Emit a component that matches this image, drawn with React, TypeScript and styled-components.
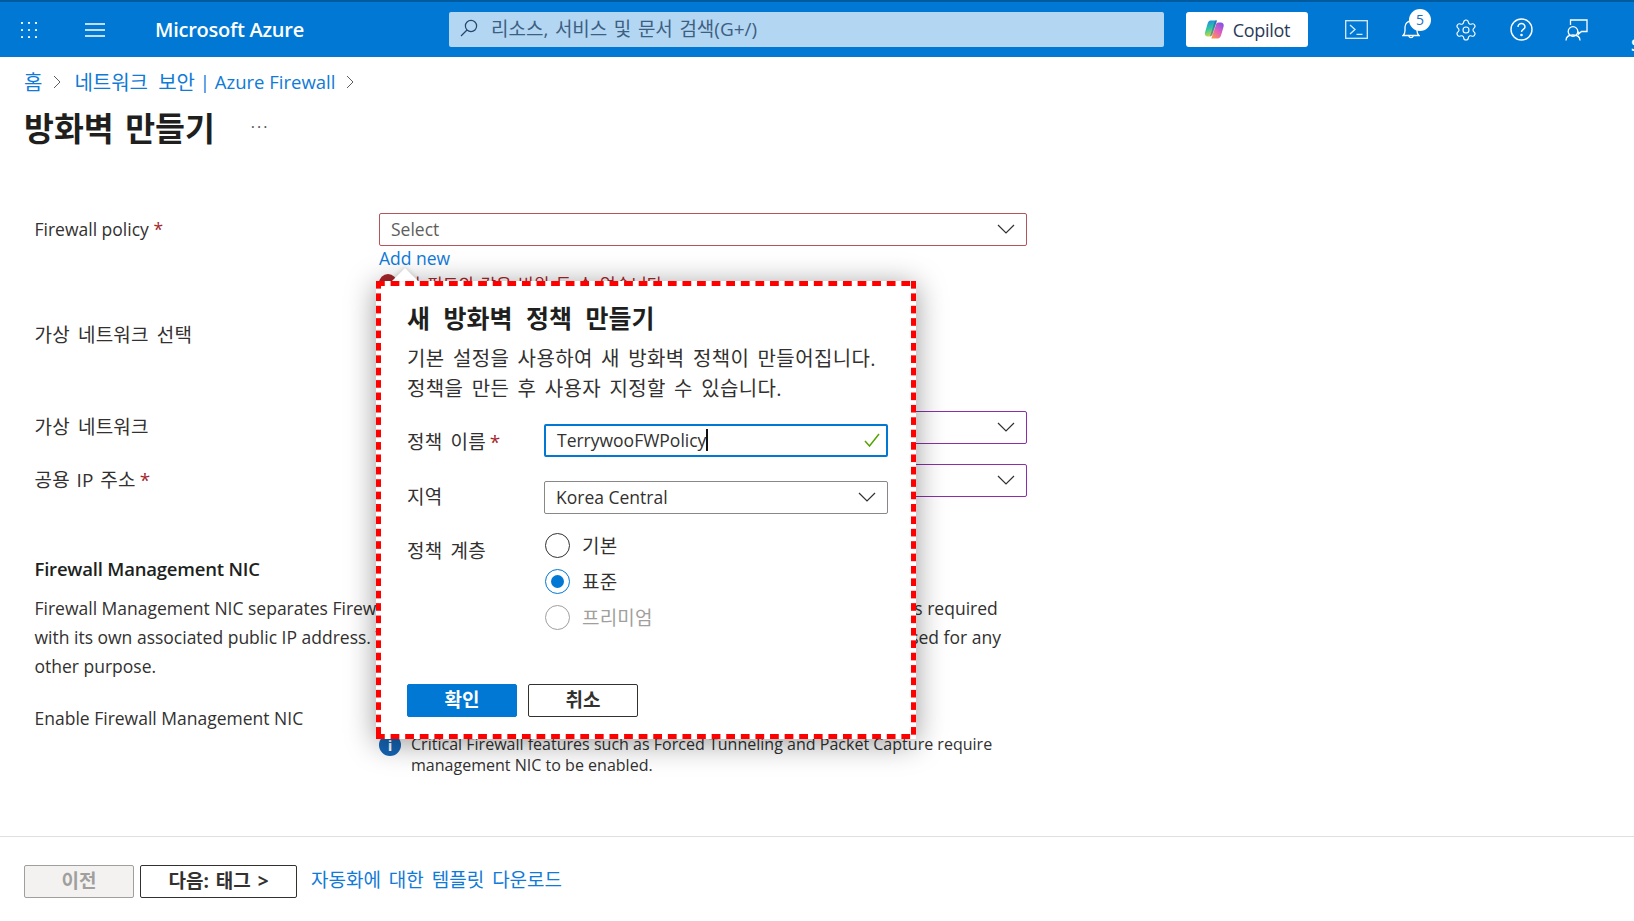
import React from 'react';
import styled, { createGlobalStyle, css } from 'styled-components';
import { Settings } from 'lucide-react';

const fontStack = '"Open Sans", "Noto Sans CJK KR", sans-serif';
const blue = '#0078d4';
const link = '#0f7ad8';
const ink = '#323130';

// hangul in the reference runs wider than the latin next to it
const hangul = css`
    font-size: 19px;
    letter-spacing: 0.2px;
    word-spacing: 3px;
`;

const GlobalStyle = createGlobalStyle`
    html, body {
        margin: 0;
        padding: 0;
        background: #fff;
        overflow: hidden;
    }
    body {
        font-family: ${fontStack};
        color: ${ink};
    }
`;

const Page = styled.div`
    width: 1634px;
    height: 921px;
    display: flex;
    flex-direction: column;
    overflow: hidden;
`;

const TopBar = styled.header`
    height: 55px;
    flex: none;
    display: flex;
    align-items: center;
    background: ${blue};
    border-top: 2px solid #005a9e;
    color: #fff;
    overflow: hidden;
`;

const BarSlot = styled.div<{ $left: number; $width: number }>`
    flex: none;
    margin-left: ${p => p.$left}px;
    width: ${p => p.$width}px;
    display: flex;
    align-items: center;
    justify-content: center;
    position: relative;
`;

const Brand = styled.div`
    flex: none;
    margin-left: 50px;
    width: 150px;
    font-size: 20px;
    font-weight: 600;
    letter-spacing: -0.25px;
    white-space: nowrap;
`;

const SearchBox = styled.div`
    flex: none;
    margin-left: 144px;
    width: 715px;
    height: 35px;
    box-sizing: border-box;
    padding: 0 0 3px 11px;
    display: flex;
    align-items: center;
    gap: 13px;
    background: #b3d6f2;
    border-radius: 2px;
    color: #3d5f82;
    font-size: 19px;
    word-spacing: 1.6px;
`;

const CopilotButton = styled.div`
    flex: none;
    margin-left: 22px;
    width: 122px;
    height: 35px;
    display: flex;
    align-items: center;
    justify-content: center;
    gap: 8px;
    background: #fff;
    border-radius: 3px;
    color: #2a3a58;
    font-size: 18px;
    font-weight: 500;
    letter-spacing: -0.3px;
`;

const Badge = styled.span`
    position: absolute;
    top: -10px;
    left: 10px;
    width: 22px;
    height: 22px;
    border-radius: 50%;
    background: #fff;
    color: #1b6ec2;
    font-size: 14px;
    line-height: 22px;
    text-align: center;
`;

const UserInitial = styled.span`
    flex: none;
    margin-left: 43px;
    margin-top: 30px;
    font-size: 16px;
    font-weight: 600;
`;

const Main = styled.main`
    flex: 1;
    position: relative;
`;

const Crumbs = styled.nav`
    height: 24px;
    margin-top: 12px;
    padding-left: 24px;
    display: flex;
    align-items: center;
    font-size: 18.5px;
    color: ${link};
    white-space: pre;
`;

const CrumbKo = styled.span`
    font-size: 20px;
    word-spacing: 5px;
`;

const CrumbArrow = styled.svg`
    margin: 2px 13px 0 11px;
`;

const TitleRow = styled.div`
    margin-top: 13px;
    padding-left: 24px;
    height: 41px;
    display: flex;
    align-items: center;
`;

const Title = styled.h1`
    margin: 0;
    font-size: 32.5px;
    font-weight: 700;
    color: #201f1e;
    word-spacing: 3px;
`;

const More = styled.span`
    margin-left: 36px;
    font-size: 16px;
    letter-spacing: 2px;
    color: #555;
`;

const Form = styled.div`
    padding-left: 34.5px;
    width: 992.5px;
`;

const Row = styled.div<{ $gap: number }>`
    margin-top: ${p => p.$gap}px;
    display: grid;
    grid-template-columns: 344.5px 1fr;
`;

const FieldLabel = styled.label<{ $ko?: boolean; $tight?: boolean }>`
    font-size: 17.5px;
    line-height: 33px;
    color: ${ink};
    ${p => p.$ko && hangul}
    ${p => p.$tight && 'word-spacing: 1.5px;'}
`;

const Star = styled.span<{ $left?: number }>`
    color: #a4262c;
    margin-left: ${p => p.$left || 0}px;
`;

const SelectBox = styled.div<{ $border?: string; $muted?: boolean }>`
    height: 33px;
    box-sizing: border-box;
    padding: 0 11px 2px;
    display: flex;
    align-items: center;
    justify-content: space-between;
    border: 1px solid ${p => p.$border || '#8a8886'};
    border-radius: 2px;
    background: #fff;
    font-size: 17.5px;
    color: ${p => (p.$muted ? '#605e5c' : ink)};
`;

const AddLink = styled.a`
    display: block;
    font-size: 17.5px;
    line-height: 24px;
    color: ${link};
`;

const FieldError = styled.div`
    display: flex;
    align-items: center;
    gap: 8px;
    height: 22px;
    margin-top: 2px;
    font-size: 17px;
    word-spacing: 2px;
    color: #a4262c;
`;

const ErrorDot = styled.span`
    width: 18px;
    height: 18px;
    border-radius: 50%;
    background: #a4262c;
`;

const SectionTitle = styled.h2`
    margin: 58px 0 0;
    font-size: 18.5px;
    line-height: 28px;
    font-weight: 600;
    color: #201f1e;
    letter-spacing: -0.2px;
`;

const Paragraph = styled.p`
    margin: 11px 0 0;
    font-size: 17.5px;
    line-height: 29px;
    color: ${ink};
    white-space: nowrap;
`;

const TightRun = styled.span`
    letter-spacing: -0.1px;
`;

const NoteBlock = styled.div`
    margin-top: 32px;
    display: flex;
    gap: 10px;
`;

const NoteIcon = styled.span`
    flex: none;
    width: 22px;
    height: 22px;
    border-radius: 50%;
    background: #1565b5;
    color: #fff;
    font-size: 15px;
    font-weight: 700;
    line-height: 22px;
    text-align: center;
`;

const NoteText = styled.div`
    font-size: 16.05px;
    line-height: 21px;
    color: ${ink};
    white-space: nowrap;
`;

const dashRed = '#ff0000';

const Popup = styled.section`
    position: absolute;
    left: 376px;
    top: 224px;
    width: 540px;
    height: 458px;
    box-sizing: border-box;
    padding: 21px 0 0 31px;
    background-color: #fff;
    background-image:
        linear-gradient(90deg, ${dashRed} 9px, transparent 9px),
        linear-gradient(90deg, ${dashRed} 9px, transparent 9px),
        linear-gradient(180deg, ${dashRed} 8px, transparent 8px),
        linear-gradient(180deg, ${dashRed} 8px, transparent 8px);
    background-size: 14.6px 5px, 14.6px 5px, 5px 12.4px, 5px 12.4px;
    background-position: 0 0, 0 100%, 0 0, 100% 0;
    background-repeat: repeat-x, repeat-x, repeat-y, repeat-y;
    box-shadow: 0 4px 28px rgba(0, 0, 0, 0.4);
    z-index: 5;

    &::before {
        content: '';
        position: absolute;
        top: -13px;
        left: 16px;
        border-left: 13px solid transparent;
        border-right: 13px solid transparent;
        border-bottom: 13px solid #fff;
        filter: drop-shadow(0 -1px 2px rgba(0, 0, 0, 0.15));
    }
`;

const PopupTitle = styled.h3`
    margin: 0;
    font-size: 25px;
    line-height: 32px;
    font-weight: 700;
    word-spacing: 7px;
    color: #201f1e;
`;

const PopupText = styled.p`
    margin: 10px 0 0;
    font-size: 20px;
    line-height: 30px;
    letter-spacing: 0.4px;
    word-spacing: 2.7px;
    color: ${ink};
`;

const PopupRow = styled.div<{ $gap: number }>`
    margin-top: ${p => p.$gap}px;
    display: grid;
    grid-template-columns: 137px 344px;
`;

const PopupLabel = styled.div<{ $drop?: number }>`
    ${hangul}
    line-height: 33px;
    margin-top: ${p => p.$drop || 0}px;
    color: ${ink};
`;

const NameInput = styled.div`
    height: 33px;
    box-sizing: border-box;
    padding: 0 6px 2px 11px;
    display: flex;
    align-items: center;
    border: 2px solid ${blue};
    border-radius: 2px;
    font-size: 17.5px;
    color: ${ink};
`;

const Caret = styled.span`
    width: 1.5px;
    height: 22px;
    background: #111;
`;

const CheckMark = styled.svg`
    margin-left: auto;
`;

const RadioGroup = styled.div`
    display: flex;
    flex-direction: column;
`;

const RadioRow = styled.div<{ $disabled?: boolean }>`
    ${hangul}
    height: 36px;
    display: flex;
    align-items: center;
    gap: 12px;
    padding-left: 1px;
    color: ${p => (p.$disabled ? '#a19f9d' : ink)};
`;

const RadioDot = styled.span<{ $on?: boolean; $disabled?: boolean }>`
    width: 25px;
    height: 25px;
    box-sizing: border-box;
    border-radius: 50%;
    border: 1.5px solid ${p => (p.$on ? blue : p.$disabled ? '#a19f9d' : '#323130')};
    display: flex;
    align-items: center;
    justify-content: center;

    &::after {
        content: '';
        width: 13px;
        height: 13px;
        border-radius: 50%;
        background: ${p => (p.$on ? blue : 'transparent')};
    }
`;

const PopupActions = styled.div`
    margin-top: 49px;
    display: flex;
    gap: 11px;
`;

const Button = styled.button<{ $kind?: 'primary' | 'disabled'; $width?: number }>`
    height: 33px;
    width: ${p => p.$width || 110}px;
    padding: 0 0 4px;
    box-sizing: border-box;
    border-radius: 2px;
    border: 1px solid ${p => (p.$kind === 'primary' ? blue : p.$kind === 'disabled' ? '#a19f9d' : '#323130')};
    background: ${p => (p.$kind === 'primary' ? blue : p.$kind === 'disabled' ? '#f3f2f1' : '#fff')};
    color: ${p => (p.$kind === 'primary' ? '#fff' : p.$kind === 'disabled' ? '#a19f9d' : '#323130')};
    font-family: ${fontStack};
    font-size: 19px;
    font-weight: 700;
    word-spacing: 2px;
`;

const Footer = styled.footer`
    height: 85px;
    flex: none;
    box-sizing: border-box;
    border-top: 1px solid #e1dfdd;
    padding: 28px 0 0 24px;
    display: flex;
    align-items: flex-start;
    gap: 6px;
`;

const FooterLink = styled.a`
    margin-left: 8px;
    font-size: 19px;
    line-height: 31px;
    word-spacing: 3px;
    color: ${link};
`;

const Chevron = () => (
    <svg width="18" height="10" viewBox="0 0 18 10" fill="none">
        <path d="M1 1l8 8 8-8" stroke="#323130" strokeWidth="1.2" />
    </svg>
);

const Waffle = () => (
    <svg width="16" height="16" viewBox="0 0 16 16" fill="#fff">
        {[1, 8, 15].map(y =>
            [1, 8, 15].map(x => <circle key={`${x}-${y}`} cx={x} cy={y} r="1.1" />)
        )}
    </svg>
);

const Burger = () => (
    <svg width="20" height="14" viewBox="0 0 20 14" stroke="#fff" strokeWidth="1.4">
        <path d="M0 1h20M0 7h20M0 13h20" />
    </svg>
);

const SearchGlass = () => (
    <svg width="18" height="18" viewBox="0 0 18 18" fill="none" stroke="#23476d" strokeWidth="1.2">
        <circle cx="11" cy="7" r="5.6" />
        <path d="M7 11l-6 6" />
    </svg>
);

const CopilotLogo = () => (
    <svg width="21" height="19" viewBox="0 0 20 19">
        <defs>
            <linearGradient id="cpA" x1="0.2" y1="0" x2="0.5" y2="1">
                <stop offset="0" stopColor="#1f86ea" />
                <stop offset="0.5" stopColor="#2fc6a4" />
                <stop offset="1" stopColor="#dcdc3a" />
            </linearGradient>
            <linearGradient id="cpB" x1="0.9" y1="0" x2="0.2" y2="1">
                <stop offset="0" stopColor="#7a52ea" />
                <stop offset="0.55" stopColor="#e45fbe" />
                <stop offset="1" stopColor="#f8964a" />
            </linearGradient>
        </defs>
        <path d="M6 0.5h6.5L8 14c-.5 1.6-1.6 2.4-3 2.4H3.2C1 16.4 -.2 14.5.5 12.4L3 4C3.6 1.8 4.5.5 6 .5z" fill="url(#cpA)" />
        <path d="M14 2.6h2.2c2.3 0 3.6 1.8 2.9 4L16.7 15c-.7 2.2-1.8 3.6-3.4 3.6H6.8L11.4 5c.5-1.6 1.4-2.4 2.6-2.4z" fill="url(#cpB)" />
        <path d="M10.5 0.5h2L8 14.2c-.5 1.4-1.3 2.2-2.6 2.2l4-12.5z" fill="#1e3fa8" opacity="0.45" />
    </svg>
);

const TerminalIcon = () => (
    <svg width="23" height="19" viewBox="0 0 23 19" fill="none" stroke="#d9ecfb" strokeWidth="1.3">
        <rect x="0.7" y="0.7" width="21.6" height="17.6" />
        <path d="M5 5l5 4.5L5 14M11.5 14.3h6" />
    </svg>
);

const BellIcon = () => (
    <svg width="18" height="21" viewBox="0 0 18 21" fill="none" stroke="#fff" strokeWidth="1.3">
        <path d="M1 16.5c1.6-1.2 2-2.6 2-5V8a6 6 0 0112 0v3.5c0 2.4.4 3.8 2 5z" />
        <path d="M6.8 17a2.3 2.3 0 004.4 0" />
    </svg>
);

const HelpIcon = () => (
    <svg width="23" height="23" viewBox="0 0 23 23" fill="none" stroke="#fff" strokeWidth="1.4">
        <circle cx="11.5" cy="11.5" r="10.5" />
        <path d="M8 9a3.5 3.5 0 117 0c0 2.4-3.5 2.4-3.5 5" />
        <circle cx="11.5" cy="17" r="0.6" fill="#fff" />
    </svg>
);

const FeedbackIcon = () => (
    <svg width="23" height="22" viewBox="0 0 23 22" fill="none" stroke="#fff" strokeWidth="1.3">
        <circle cx="8" cy="12.5" r="4.8" />
        <path d="M1 21.5c0-3.5 3-5.5 7-5.5s7 2 7 5.5" />
        <path d="M5.5 6V1H22v11.5h-5.5l-3 2.5v-2.5" />
    </svg>
);

const ArrowRight = () => (
    <CrumbArrow width="8" height="14" viewBox="0 0 8 14" fill="none">
        <path d="M1 1l6 6-6 6" stroke="#605e5c" strokeWidth="1" />
    </CrumbArrow>
);

export default function App() {
    return (
        <Page>
            <GlobalStyle />
            <TopBar>
                <BarSlot $left={21} $width={16}><Waffle /></BarSlot>
                <BarSlot $left={48} $width={20}><Burger /></BarSlot>
                <Brand>Microsoft Azure</Brand>
                <SearchBox>
                    <SearchGlass />
                    리소스, 서비스 및 문서 검색(G+/)
                </SearchBox>
                <CopilotButton>
                    <CopilotLogo />
                    Copilot
                </CopilotButton>
                <BarSlot $left={37} $width={23}><TerminalIcon /></BarSlot>
                <BarSlot $left={31} $width={24}>
                    <BellIcon />
                    <Badge>5</Badge>
                </BarSlot>
                <BarSlot $left={31} $width={24}>
                    <Settings size={24} strokeWidth={1.1} color="#fff" />
                </BarSlot>
                <BarSlot $left={32} $width={23}><HelpIcon /></BarSlot>
                <BarSlot $left={32} $width={23}><FeedbackIcon /></BarSlot>
                <UserInitial>S</UserInitial>
            </TopBar>

            <Main>
                <Crumbs>
                    <CrumbKo>홈</CrumbKo>
                    <ArrowRight />
                    <CrumbKo>네트워크 보안</CrumbKo> | Azure Firewall
                    <ArrowRight />
                </Crumbs>
                <TitleRow>
                    <Title>방화벽 만들기</Title>
                    <More>···</More>
                </TitleRow>

                <Form>
                    <Row $gap={66}>
                        <FieldLabel>Firewall policy <Star>*</Star></FieldLabel>
                        <div>
                            <SelectBox $border="#b5545a" $muted>
                                Select
                                <Chevron />
                            </SelectBox>
                            <AddLink>Add new</AddLink>
                            <FieldError>
                                <ErrorDot />
                                이 필드의 값은 비워 둘 수 없습니다.
                            </FieldError>
                        </div>
                    </Row>
                    <Row $gap={25}>
                        <FieldLabel $ko>가상 네트워크 선택</FieldLabel>
                    </Row>
                    <Row $gap={59}>
                        <FieldLabel $ko>가상 네트워크</FieldLabel>
                        <SelectBox $border="#8c2ea8"><span /><Chevron /></SelectBox>
                    </Row>
                    <Row $gap={20}>
                        <FieldLabel $ko $tight>공용 IP 주소<Star $left={4}>*</Star></FieldLabel>
                        <SelectBox $border="#8c2ea8"><span /><Chevron /></SelectBox>
                    </Row>
                    <SectionTitle>Firewall Management NIC</SectionTitle>
                    <Paragraph>
                        Firewall Management NIC separates Firewall management traffic from customer traffic. A dedicated subnet is required<br />
                        with its own associated public IP address. <TightRun>This subnet and its public IP address are reserved and cannot be</TightRun> used for any<br />
                        other purpose.
                    </Paragraph>
                    <Row $gap={21}>
                        <FieldLabel>Enable Firewall Management NIC</FieldLabel>
                        <NoteBlock>
                            <NoteIcon>i</NoteIcon>
                            <NoteText>
                                Critical Firewall features such as Forced Tunneling and Packet Capture require<br />
                                management NIC to be enabled.
                            </NoteText>
                        </NoteBlock>
                    </Row>
                </Form>

                <Popup>
                    <PopupTitle>새 방화벽 정책 만들기</PopupTitle>
                    <PopupText>
                        기본 설정을 사용하여 새 방화벽 정책이 만들어집니다.<br />
                        정책을 만든 후 사용자 지정할 수 있습니다.
                    </PopupText>
                    <PopupRow $gap={20}>
                        <PopupLabel $drop={2}>정책 이름<Star $left={4}>*</Star></PopupLabel>
                        <NameInput>
                            TerrywooFWPolicy
                            <Caret />
                            <CheckMark width="16" height="14" viewBox="0 0 16 14" fill="none">
                                <path d="M1 8l4.5 5L15 1" stroke="#57a300" strokeWidth="1.5" />
                            </CheckMark>
                        </NameInput>
                    </PopupRow>
                    <PopupRow $gap={22}>
                        <PopupLabel>지역</PopupLabel>
                        <SelectBox>
                            Korea Central
                            <Chevron />
                        </SelectBox>
                    </PopupRow>
                    <PopupRow $gap={13}>
                        <PopupLabel $drop={8}>정책 계층</PopupLabel>
                        <RadioGroup>
                            <RadioRow><RadioDot />기본</RadioRow>
                            <RadioRow><RadioDot $on />표준</RadioRow>
                            <RadioRow $disabled><RadioDot $disabled />프리미엄</RadioRow>
                        </RadioGroup>
                    </PopupRow>
                    <PopupActions>
                        <Button $kind="primary">확인</Button>
                        <Button>취소</Button>
                    </PopupActions>
                </Popup>
            </Main>

            <Footer>
                <Button $kind="disabled">이전</Button>
                <Button $width={157}>다음: 태그 &gt;</Button>
                <FooterLink>자동화에 대한 템플릿 다운로드</FooterLink>
            </Footer>
        </Page>
    );
}
